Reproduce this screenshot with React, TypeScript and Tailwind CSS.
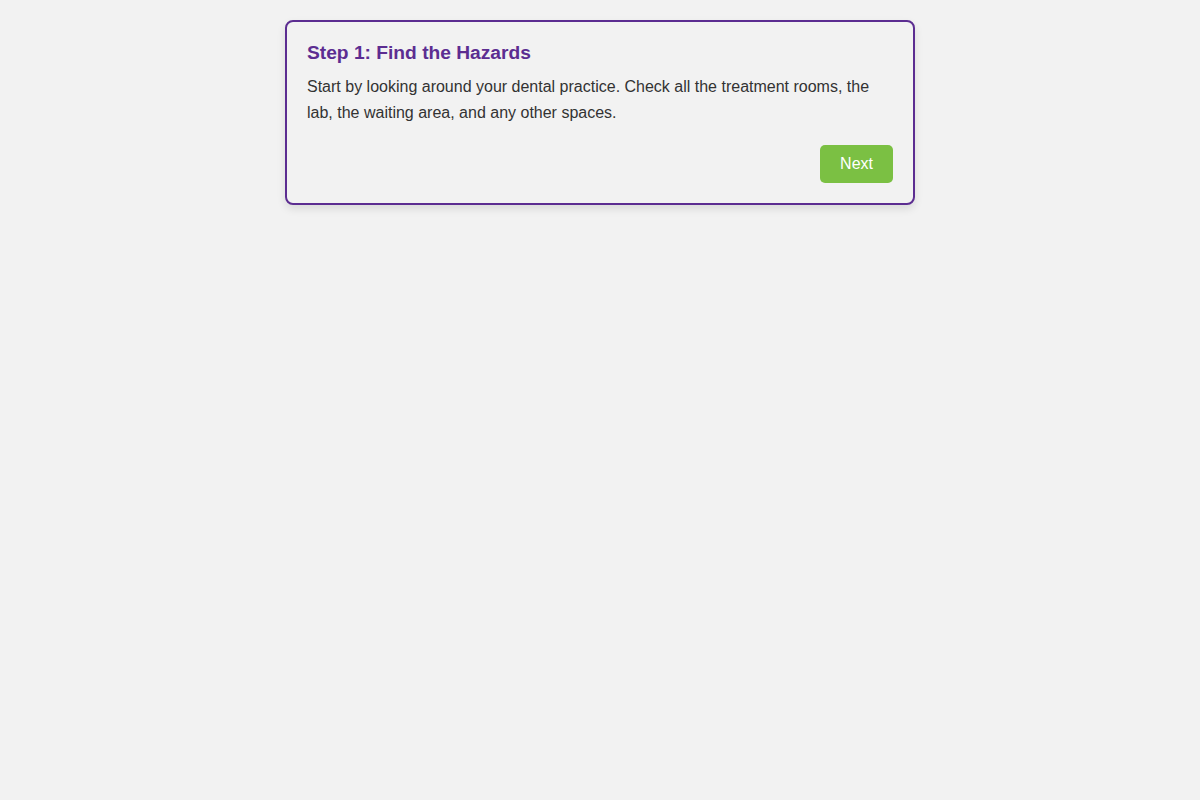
export default function App() {
  return (
    <div className="min-h-screen bg-[#f2f2f2] pt-5 font-['Liberation_Sans',Arial,sans-serif]">
      <div className="mx-auto w-[630px] rounded-lg border-2 border-[#5c2d91] bg-[#f2f2f2] p-5 shadow-[0_4px_8px_rgba(0,0,0,0.1)]">
        <h2 className="mb-[10px] text-[19.2px] leading-[22px] font-bold text-[#5c2d91]">
          Step 1: Find the Hazards
        </h2>
        <p className="text-base leading-[26px] text-[#333]">
          Start by looking around your dental practice. Check all the treatment
          rooms, the lab, the waiting area, and any other spaces.
        </p>
        <div className="mt-[19px] flex justify-end">
          <button className="rounded-[5px] bg-[#7bc043] px-5 py-[10px] text-base leading-[18px] text-white">
            Next
          </button>
        </div>
      </div>
    </div>
  );
}
